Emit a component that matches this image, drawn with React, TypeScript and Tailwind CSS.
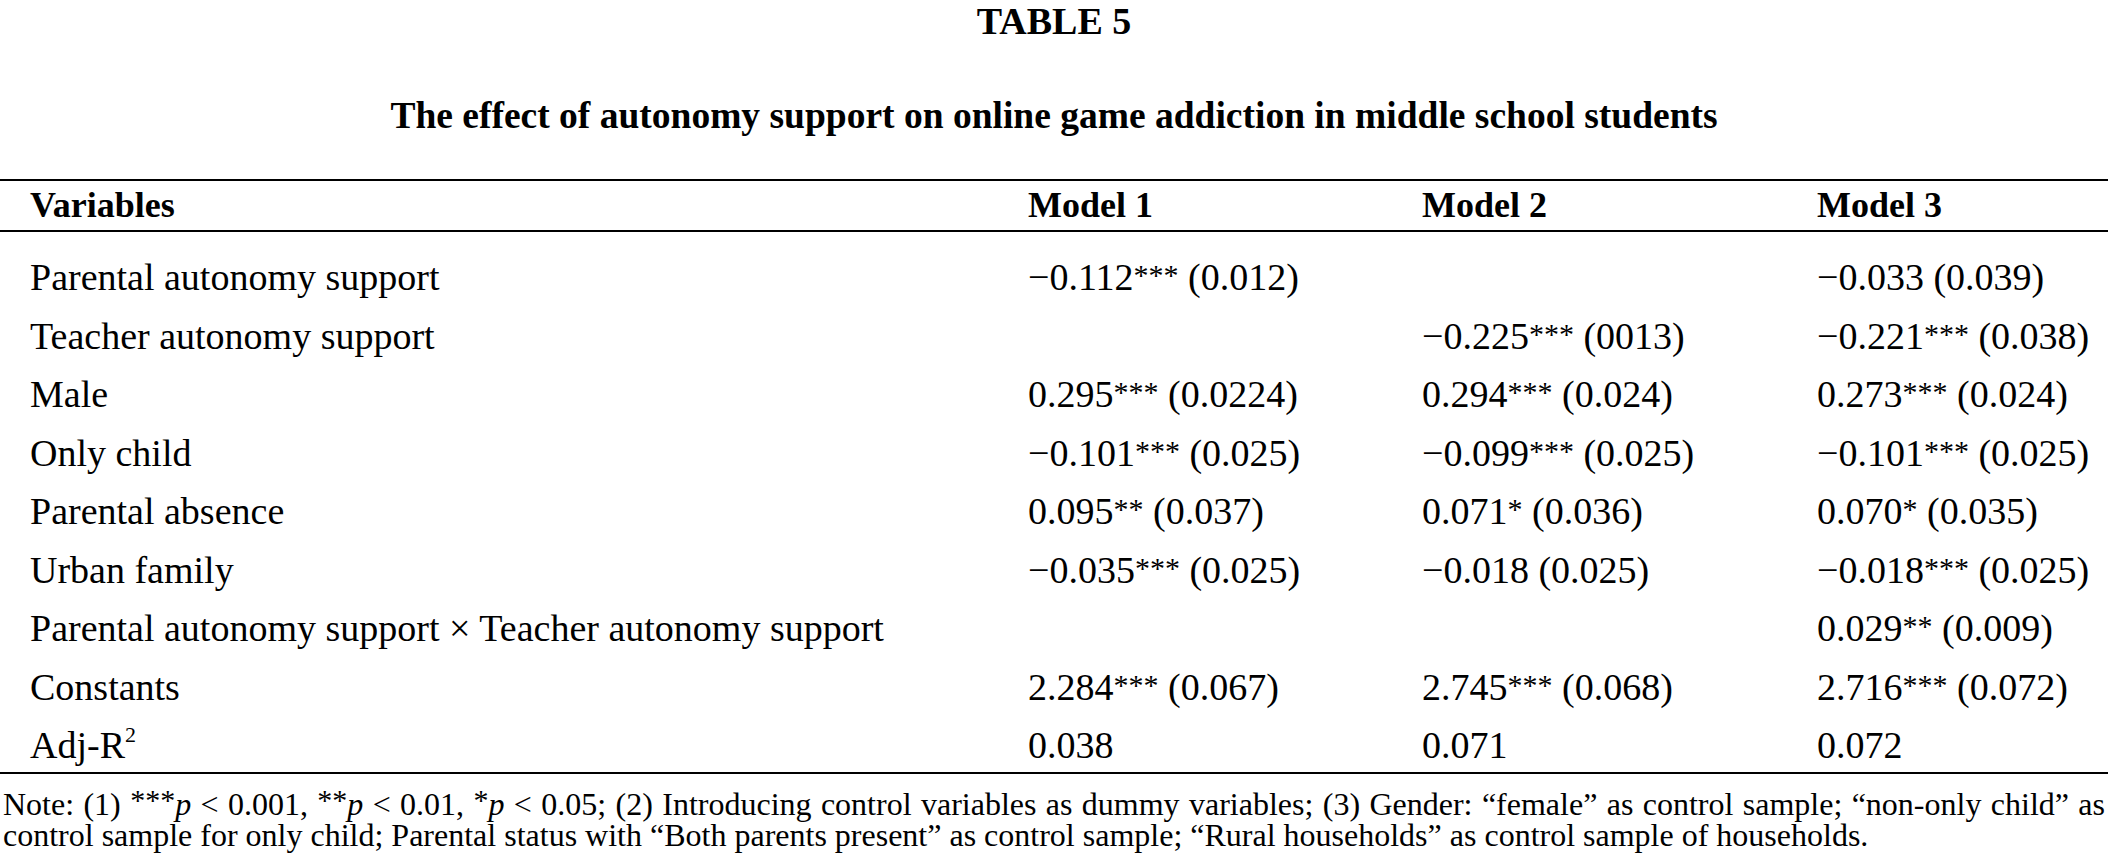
type Row = {
  label: React.ReactNode;
  m1: string;
  m2: string;
  m3: string;
};

const rows: Row[] = [
  { label: "Parental autonomy support", m1: "−0.112*** (0.012)", m2: "", m3: "−0.033 (0.039)" },
  { label: "Teacher autonomy support", m1: "", m2: "−0.225*** (0013)", m3: "−0.221*** (0.038)" },
  { label: "Male", m1: "0.295*** (0.0224)", m2: "0.294*** (0.024)", m3: "0.273*** (0.024)" },
  { label: "Only child", m1: "−0.101*** (0.025)", m2: "−0.099*** (0.025)", m3: "−0.101*** (0.025)" },
  { label: "Parental absence", m1: "0.095** (0.037)", m2: "0.071* (0.036)", m3: "0.070* (0.035)" },
  { label: "Urban family", m1: "−0.035*** (0.025)", m2: "−0.018 (0.025)", m3: "−0.018*** (0.025)" },
  {
    label: "Parental autonomy support × Teacher autonomy support",
    m1: "",
    m2: "",
    m3: "0.029** (0.009)",
  },
  { label: "Constants", m1: "2.284*** (0.067)", m2: "2.745*** (0.068)", m3: "2.716*** (0.072)" },
  {
    label: (
      <>
        Adj-R<sup className="text-[22px] top-[-0.75em]">2</sup>
      </>
    ),
    m1: "0.038",
    m2: "0.071",
    m3: "0.072",
  },
];

const cols = "grid grid-cols-[1028px_394px_395px_1fr]";

// small raised asterisks, as in the printed table
function Stars({ n }: { n: string }) {
  return <span className="relative -top-[5px] text-[30px] leading-none">{n}</span>;
}

function Value({ v }: { v: string }) {
  const m = v.match(/^(.*?)(\*+)(.*)$/);
  if (!m) return <>{v}</>;
  return (
    <>
      {m[1]}
      <Stars n={m[2]} />
      {m[3]}
    </>
  );
}

export default function App() {
  return (
    <div className="w-[2108px] h-[857px] overflow-hidden bg-white text-black font-['Liberation_Serif',serif]">
      <div className="h-[38px] pt-[4px] text-center text-[38px] font-bold leading-[34px]">TABLE 5</div>
      <div className="mt-[58px] h-[40px] text-center text-[37.5px] font-bold leading-[40px]">
        The effect of autonomy support on online game addiction in middle school students
      </div>

      <div className="mt-[43px] border-t-2 border-black" />
      <div className={`${cols} h-[49px] text-[36px] font-bold leading-[49px]`}>
        <div className="pl-[30px]">Variables</div>
        <div>Model 1</div>
        <div>Model 2</div>
        <div>Model 3</div>
      </div>
      <div className="border-t-2 border-black" />

      <div className="flex flex-col gap-[14.5px] pt-[23px] pb-[5px] text-[38px] leading-[44px]">
        {rows.map((r, i) => (
          <div key={i} className={`${cols} whitespace-nowrap`}>
            <div className="pl-[30px]">{r.label}</div>
            <div>
              <Value v={r.m1} />
            </div>
            <div>
              <Value v={r.m2} />
            </div>
            <div>
              <Value v={r.m3} />
            </div>
          </div>
        ))}
      </div>
      <div className="border-t-2 border-black" />

      <div className="mt-[15px] px-[3px] text-[32px] leading-[31px]">
        <div className="text-justify [text-align-last:justify]">
          Note: (1) <Stars n="***" />
          <i>p</i> &lt; 0.001, <Stars n="**" />
          <i>p</i> &lt; 0.01, <Stars n="*" />
          <i>p</i> &lt; 0.05; (2) Introducing control variables as dummy variables; (3) Gender: “female” as
          control sample; “non-only child” as
        </div>
        <div className="whitespace-nowrap">
          control sample for only child; Parental status with “Both parents present” as control sample; “Rural
          households” as control sample of households.
        </div>
      </div>
    </div>
  );
}
